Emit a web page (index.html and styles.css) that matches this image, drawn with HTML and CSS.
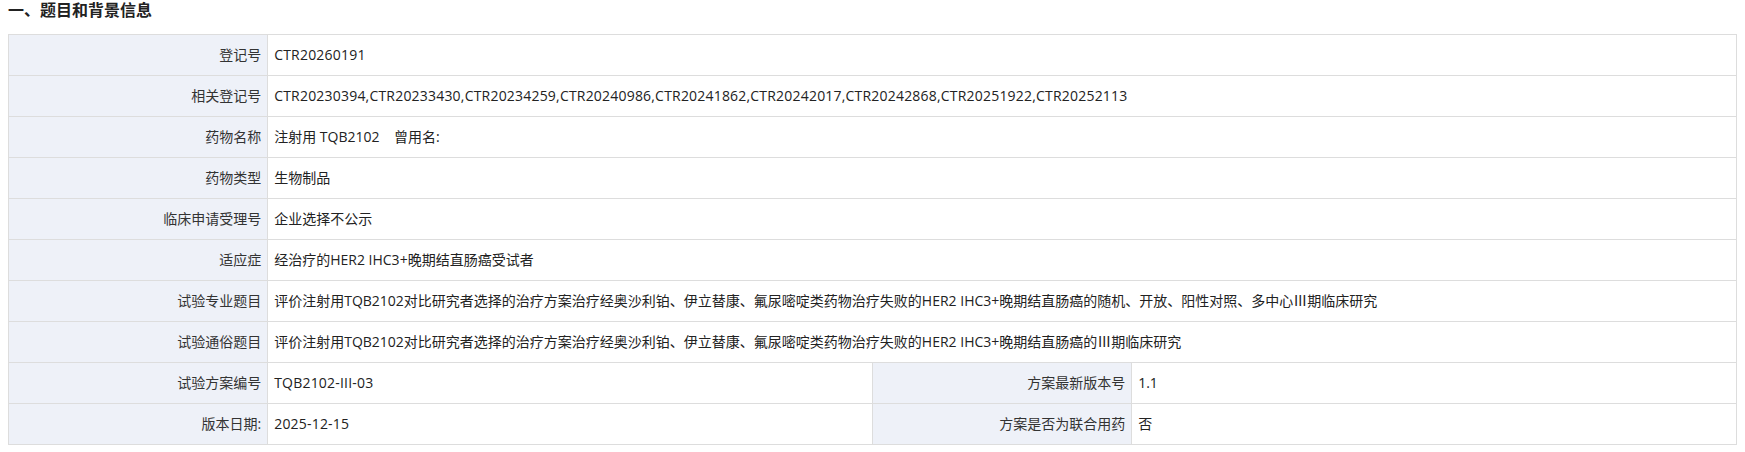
FILE: index.html
```html
<!DOCTYPE html>
<html lang="zh-CN">
<head>
<meta charset="utf-8">
<title>题目和背景信息</title>
<link rel="stylesheet" href="styles.css">
</head>
<body>
<h3 class="section-title">一、题目和背景信息</h3>
<table class="info-table">
  <colgroup>
    <col class="col-label"><col class="col-value"><col class="col-label"><col class="col-value">
  </colgroup>
  <tbody>
    <tr><th class="label">登记号</th><td class="value code" colspan="3">CTR20260191</td></tr>
    <tr><th class="label">相关登记号</th><td class="value code" colspan="3">CTR20230394,CTR20233430,CTR20234259,CTR20240986,CTR20241862,CTR20242017,CTR20242868,CTR20251922,CTR20252113</td></tr>
    <tr><th class="label">药物名称</th><td class="value" colspan="3">注射用 TQB2102&nbsp;&nbsp;&nbsp;&nbsp;曾用名:</td></tr>
    <tr><th class="label">药物类型</th><td class="value" colspan="3">生物制品</td></tr>
    <tr><th class="label">临床申请受理号</th><td class="value" colspan="3">企业选择不公示</td></tr>
    <tr><th class="label">适应症</th><td class="value" colspan="3">经治疗的HER2 IHC3+晚期结直肠癌受试者</td></tr>
    <tr><th class="label">试验专业题目</th><td class="value" colspan="3">评价注射用TQB2102对比研究者选择的治疗方案治疗经奥沙利铂、伊立替康、氟尿嘧啶类药物治疗失败的HER2 IHC3+晚期结直肠癌的随机、开放、阳性对照、多中心Ⅲ期临床研究</td></tr>
    <tr><th class="label">试验通俗题目</th><td class="value" colspan="3">评价注射用TQB2102对比研究者选择的治疗方案治疗经奥沙利铂、伊立替康、氟尿嘧啶类药物治疗失败的HER2 IHC3+晚期结直肠癌的Ⅲ期临床研究</td></tr>
    <tr><th class="label">试验方案编号</th><td class="value code">TQB2102-III-03</td><th class="label">方案最新版本号</th><td class="value">1.1</td></tr>
    <tr><th class="label">版本日期:</th><td class="value code">2025-12-15</td><th class="label">方案是否为联合用药</th><td class="value">否</td></tr>
  </tbody>
</table>
</body>
</html>
```
FILE: styles.css
```css
html, body {
  margin: 0;
  padding: 0;
  background: #ffffff;
}
body {
  padding: 0 8px;
  font-family: "Open Sans", "Noto Sans CJK SC", "Microsoft YaHei", sans-serif;
  color: #333333;
}
.section-title {
  margin: 0 0 14px 0;
  font-size: 16px;
  line-height: 20px;
  font-weight: bold;
  color: #222222;
}
.info-table {
  width: 100%;
  border-collapse: collapse;
  table-layout: fixed;
  font-size: 14px;
}
.col-label { width: 15%; }
.col-value { width: 35%; }
.info-table th,
.info-table td {
  border: 1px solid #dddddd;
  height: 41px;
  padding: 0 6px;
  line-height: 20px;
  box-sizing: border-box;
  vertical-align: middle;
}
.label {
  background: #eef1f8;
  text-align: right;
  font-weight: normal;
  color: #333333;
  padding-right: 8px;
}
.value {
  text-align: left;
  background: #ffffff;
  color: #222222;
}
.code {
  letter-spacing: 0.2px;
}
```
